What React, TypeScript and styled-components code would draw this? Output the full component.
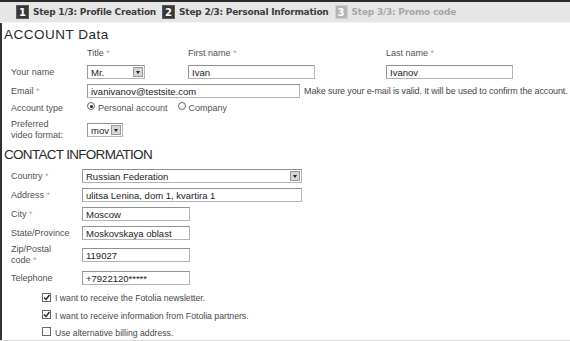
import React from 'react'
import styled, { createGlobalStyle } from 'styled-components'

const GlobalStyle = createGlobalStyle`
  body {
    margin: 0;
    background: #fff;
    font-family: 'Liberation Sans', Arial, sans-serif;
  }
`

const Page = styled.div`
  width: 570px;
  height: 341px;
  overflow: hidden;
  background: #fff;
  border-top: 2px solid #2b2b2b;
  box-sizing: border-box;
  position: relative;
`

const StepBar = styled.div`
  height: 20px;
  background: #e6e6e6;
  border-bottom: 1px solid #f4f4f4;
  display: flex;
  align-items: center;
  padding-left: 16px;
`

const StepNum = styled.span<{ $active: boolean }>`
  width: 13px;
  height: 14px;
  display: inline-flex;
  align-items: center;
  justify-content: center;
  background: ${({ $active }) => ($active ? '#383838' : '#b4b4b4')};
  border: 1px solid ${({ $active }) => ($active ? '#5a5a5a' : '#d0d0d0')};
  box-sizing: border-box;
  color: #fff;
  font: bold 10px 'DejaVu Sans', sans-serif;
  margin-right: 4px;
`

const StepLabel = styled.span<{ $active: boolean }>`
  font: bold 9px 'DejaVu Sans', sans-serif;
  letter-spacing: -0.22px;
  color: ${({ $active }) => ($active ? '#3c3c3c' : '#a6a6a6')};
  margin-right: 6px;
  white-space: nowrap;
`

const Content = styled.div`
  border-left: 2px solid #333;
  padding-left: 2px;
  height: 320px;
`

const SectionTitle = styled.div<{ $h: number; $track: number }>`
  font-size: 13.5px;
  color: #2a2a2a;
  height: ${({ $h }) => $h}px;
  display: flex;
  align-items: center;
  letter-spacing: ${({ $track }) => $track}px;
`

const Row = styled.div<{ $h: number; $labelW: number }>`
  display: flex;
  align-items: center;
  height: ${({ $h }) => $h}px;
  padding-left: 7px;
  & > label:first-child {
    width: ${({ $labelW }) => $labelW}px;
  }
`

const Label = styled.label`
  font-size: 9px;
  color: #505050;
  line-height: 11px;
  flex-shrink: 0;
`

const Star = styled.span`
  color: #aaa;
`

const ColHead = styled.span<{ $w: number }>`
  width: ${({ $w }) => $w}px;
  font-size: 9px;
  color: #505050;
  flex-shrink: 0;
`

const Gap = styled.span<{ $w: number }>`
  width: ${({ $w }) => $w}px;
  flex-shrink: 0;
`

const Input = styled.div<{ $w: number }>`
  width: ${({ $w }) => $w}px;
  height: 14px;
  box-sizing: border-box;
  border: 1px solid #b4b4b4;
  border-top-color: #909090;
  border-left-color: #9a9a9a;
  background: #fff;
  font-size: 9.5px;
  color: #222;
  padding-left: 3px;
  display: flex;
  align-items: center;
  white-space: nowrap;
  overflow: hidden;
  flex-shrink: 0;
`

const Select = styled(Input)`
  justify-content: space-between;
  padding-right: 1px;
`

const Arrow = styled.span`
  width: 10px;
  height: 10px;
  background: #d6d6d6;
  border: 1px solid #999;
  box-sizing: border-box;
  display: flex;
  align-items: center;
  justify-content: center;
  &::after {
    content: '';
    border-left: 2.5px solid transparent;
    border-right: 2.5px solid transparent;
    border-top: 3px solid #222;
  }
`

const Hint = styled.span`
  font-size: 9px;
  color: #474747;
  margin-left: 4px;
  letter-spacing: -0.12px;
  white-space: nowrap;
`

const Radio = styled.span<{ $on?: boolean }>`
  width: 8px;
  height: 8px;
  border-radius: 50%;
  border: 1px solid #666;
  box-sizing: border-box;
  display: inline-flex;
  align-items: center;
  justify-content: center;
  margin-right: 3px;
  margin-top: -4px;
  &::after {
    content: '';
    width: 3px;
    height: 3px;
    border-radius: 50%;
    background: ${({ $on }) => ($on ? '#222' : 'transparent')};
  }
`

const Option = styled.span`
  display: inline-flex;
  align-items: center;
  font-size: 9px;
  color: #505050;
  margin-right: 10px;
`

const CheckRow = styled.div<{ $h: number }>`
  display: flex;
  align-items: center;
  height: ${({ $h }) => $h}px;
  padding-left: 38px;
  font-size: 8.7px;
  color: #474747;
`

const Box = styled.span`
  width: 9px;
  height: 9px;
  border: 1px solid #666;
  box-sizing: border-box;
  margin-right: 4px;
  display: flex;
  align-items: center;
  justify-content: center;
  margin-top: -2px;
`

function Check({ on }: { on: boolean }) {
  return (
    <Box>
      {on && (
        <svg width="7" height="7" viewBox="0 0 7 7">
          <path d="M1 3.5 L3 5.5 L6.5 1" stroke="#222" strokeWidth="1.4" fill="none" />
        </svg>
      )}
    </Box>
  )
}

const BottomLine = styled.div`
  position: absolute;
  left: 0;
  right: 0;
  bottom: 0;
  height: 1px;
  background: #d8d8d8;
`

export default function App() {
  return (
    <>
      <GlobalStyle />
      <Page>
        <StepBar>
          <StepNum $active>1</StepNum>
          <StepLabel $active>Step 1/3: Profile Creation</StepLabel>
          <StepNum $active>2</StepNum>
          <StepLabel $active>Step 2/3: Personal Information</StepLabel>
          <StepNum $active={false}>3</StepNum>
          <StepLabel $active={false}>Step 3/3: Promo code</StepLabel>
        </StepBar>
        <Content>
          <SectionTitle $h={23} $track={0.5}>
            ACCOUNT Data
          </SectionTitle>
          <Row $h={14} $labelW={76}>
            <Label />
            <ColHead $w={101}>
              Title <Star>*</Star>
            </ColHead>
            <ColHead $w={198}>
              First name <Star>*</Star>
            </ColHead>
            <ColHead $w={100}>
              Last name <Star>*</Star>
            </ColHead>
          </Row>
          <Row $h={24} $labelW={76}>
            <Label>Your name</Label>
            <Select $w={58}>
              Mr.
              <Arrow />
            </Select>
            <Gap $w={43} />
            <Input $w={127}>Ivan</Input>
            <Gap $w={71} />
            <Input $w={127}>Ivanov</Input>
          </Row>
          <Row $h={14} $labelW={76}>
            <Label>
              Email <Star>*</Star>
            </Label>
            <Input $w={213}>ivanivanov@testsite.com</Input>
            <Hint>Make sure your e-mail is valid. It will be used to confirm the account.</Hint>
          </Row>
          <Row $h={20} $labelW={76}>
            <Label>Account type</Label>
            <Option>
              <Radio $on />
              Personal account
            </Option>
            <Option>
              <Radio />
              Company
            </Option>
          </Row>
          <Row $h={24} $labelW={76}>
            <Label>
              Preferred
              <br />
              video format:
            </Label>
            <Select $w={36}>
              mov
              <Arrow />
            </Select>
          </Row>
          <SectionTitle $h={25} $track={-0.7}>
            CONTACT INFORMATION
          </SectionTitle>
          <Row $h={18} $labelW={71}>
            <Label>
              Country <Star>*</Star>
            </Label>
            <Select $w={220}>
              Russian Federation
              <Arrow />
            </Select>
          </Row>
          <Row $h={20} $labelW={71}>
            <Label>
              Address <Star>*</Star>
            </Label>
            <Input $w={220}>ulitsa Lenina, dom 1, kvartira 1</Input>
          </Row>
          <Row $h={18} $labelW={71}>
            <Label>
              City <Star>*</Star>
            </Label>
            <Input $w={108}>Moscow</Input>
          </Row>
          <Row $h={20} $labelW={71}>
            <Label>State/Province</Label>
            <Input $w={108}>Moskovskaya oblast</Input>
          </Row>
          <Row $h={24} $labelW={71}>
            <Label>
              Zip/Postal
              <br />
              code <Star>*</Star>
            </Label>
            <Input $w={108}>119027</Input>
          </Row>
          <Row $h={22} $labelW={71}>
            <Label>Telephone</Label>
            <Input $w={108}>+7922120*****</Input>
          </Row>
          <CheckRow $h={18}>
            <Check on />I want to receive the Fotolia newsletter.
          </CheckRow>
          <CheckRow $h={17}>
            <Check on />I want to receive information from Fotolia partners.
          </CheckRow>
          <CheckRow $h={17}>
            <Check on={false} />Use alternative billing address.
          </CheckRow>
        </Content>
        <BottomLine />
      </Page>
    </>
  )
}
